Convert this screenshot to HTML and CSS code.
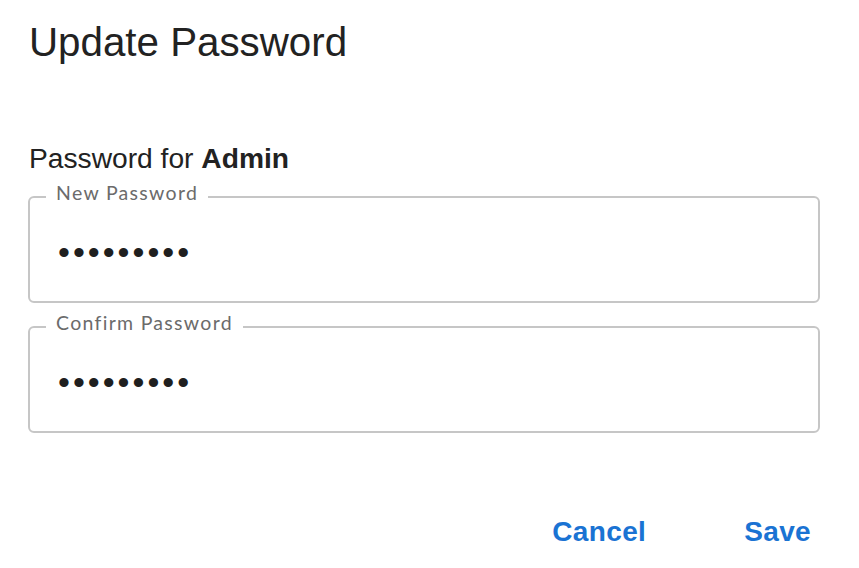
FILE: index.html
```html
<!DOCTYPE html>
<html lang="en">
<head>
<meta charset="utf-8">
<title>Update Password</title>
<link rel="stylesheet" href="styles.css">
</head>
<body>
<div class="dialog">
  <h1 class="title">Update Password</h1>
  <p class="subtitle">Password for <strong>Admin</strong></p>
  <form class="fields">
    <fieldset class="field">
      <legend class="field-label">New Password</legend>
      <span class="field-value">•••••••••</span>
    </fieldset>
    <fieldset class="field">
      <legend class="field-label">Confirm Password</legend>
      <span class="field-value">•••••••••</span>
    </fieldset>
  </form>
  <div class="actions">
    <button class="action" type="button">Cancel</button>
    <button class="action" type="button">Save</button>
  </div>
</div>
</body>
</html>
```

FILE: styles.css
```css
html, body {
  margin: 0;
  padding: 0;
  background: #ffffff;
}

.dialog {
  width: 859px;
  height: 568px;
  box-sizing: border-box;
  padding: 19px 39px 0 28px;
  font-family: "Liberation Sans", Arial, sans-serif;
  color: #222222;
}

.title {
  margin: 0 0 0 1px;
  font-size: 40.3px;
  line-height: 48px;
  font-weight: 400;
}

.subtitle {
  margin: 75px 0 0 1px;
  font-size: 28.2px;
  line-height: 32px;
}

.subtitle strong {
  font-weight: 700;
}

.fields {
  display: flex;
  flex-direction: column;
  gap: 8px;
  margin-top: 7px;
}

.field {
  margin: 0;
  padding: 0 16px 0 16px;
  border: 2px solid #c6c6c6;
  border-radius: 6px;
  height: 122px;
  box-sizing: border-box;
  min-width: 0;
}

.field-label {
  padding: 0 10px 9px 10px;
  font-family: Lato, "Open Sans", sans-serif;
  font-size: 19.5px;
  letter-spacing: 1.3px;
  color: #6b6b6b;
}

.field-value {
  display: block;
  padding: 24px 0 0 12px;
  font-size: 34px;
  line-height: 30px;
  letter-spacing: 3px;
  color: #1f1f1f;
}

.actions {
  display: flex;
  justify-content: flex-end;
  gap: 80px;
  margin-top: 79px;
}

.action {
  border: none;
  background: none;
  padding: 4px 9px;
  font-family: "Liberation Sans", Arial, sans-serif;
  font-size: 28px;
  line-height: 32px;
  font-weight: 700;
  letter-spacing: 0.35px;
  color: #1a73d3;
  cursor: pointer;
}
```
